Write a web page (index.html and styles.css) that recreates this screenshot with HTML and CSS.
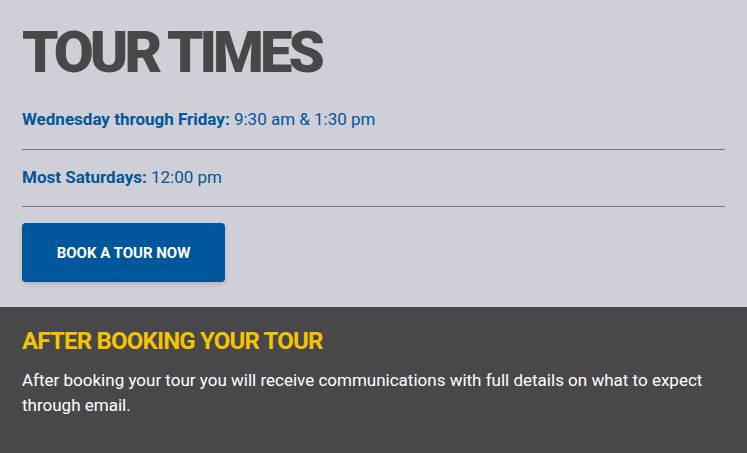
FILE: index.html
```html
<!DOCTYPE html>
<html>
<head>
<meta charset="utf-8">
<link rel="stylesheet" href="styles.css">
</head>
<body>
<section class="times">
  <h1 class="title">TOUR TIMES</h1>
  <div class="row"><strong>Wednesday through Friday:</strong> 9:30 am &amp; 1:30 pm</div>
  <div class="row"><strong>Most Saturdays:</strong> 12:00 pm</div>
  <a class="btn" href="#">BOOK A TOUR NOW</a>
</section>
<section class="after">
  <h2 class="after-title">AFTER BOOKING YOUR TOUR</h2>
  <p class="after-text">After booking your tour you will receive communications with full details on what to expect through email.</p>
</section>
</body>
</html>
```

FILE: styles.css
```css
html, body {
  margin: 0;
  padding: 0;
}
body {
  font-family: Roboto, "Liberation Sans", sans-serif;
  background: #48484a;
}
.times {
  background: #cfcfd7;
  padding: 20px 22px 25px;
}
.title {
  margin: 0;
  font-size: 58px;
  line-height: 64px;
  font-weight: 900;
  color: #48484a;
  letter-spacing: -4px;
}
.row {
  color: #00579b;
  font-size: 17px;
  line-height: 22px;
  padding: 24px 0 19px;
  border-bottom: 1px solid #77777a;
}
.row strong {
  font-weight: 700;
}
.row + .row {
  padding: 16px 0 18px;
}
.btn {
  display: flex;
  align-items: center;
  justify-content: center;
  margin-top: 16px;
  width: 203px;
  height: 59px;
  background: #00579b;
  color: #fff;
  font-weight: 700;
  font-size: 15px;
  text-decoration: none;
  border-radius: 4px;
  box-shadow: 0 2px 4px rgba(0,0,0,0.15);
}
.after {
  background: #48484a;
  padding: 20px 22px 30px;
}
.after-title {
  margin: 0;
  color: #f5c400;
  font-size: 24px;
  line-height: 28px;
  font-weight: 700;
  letter-spacing: -0.8px;
}
.after-text {
  margin: 13px 0 0;
  color: #fff;
  font-size: 17px;
  line-height: 25px;
}
```
